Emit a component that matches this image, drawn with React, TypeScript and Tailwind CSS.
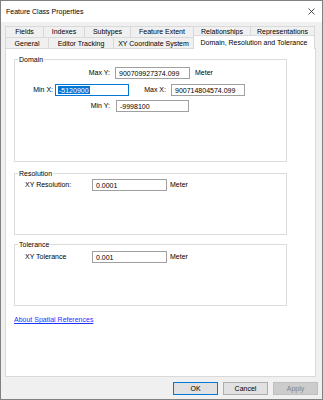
import React from 'react';

const topTabs = [
  { label: 'Fields', w: 'w-[38px]' },
  { label: 'Indexes', w: 'w-[41px]' },
  { label: 'Subtypes', w: 'w-[46px]' },
  { label: 'Feature Extent', w: 'w-[63px]' },
  { label: 'Relationships', w: 'w-[57px]' },
  { label: 'Representations', w: 'w-[65px]' },
];

const frontTabs = [
  { label: 'General', w: 'w-[43px]' },
  { label: 'Editor Tracking', w: 'w-[65px]' },
  { label: 'XY Coordinate System', w: 'w-[80px]' },
];

const Field = ({ value, w }: { value: string; w: string }) => (
  <div className={`${w} h-[12px] border border-[#a0a0a0] bg-white flex items-center pl-[3px] leading-none`}>
    {value}
  </div>
);

const Group = ({ title, className, children }: { title: string; className: string; children: React.ReactNode }) => (
  <div className={`relative w-[273px] border border-[#dcdcdc] ${className}`}>
    <span className="absolute left-[3px] -top-[5px] px-[1px] bg-white leading-[9px]">{title}</span>
    {children}
  </div>
);

export default function App() {
  return (
    <div className="w-[323px] h-[400px] border border-[#808080] bg-[#f0f0f0] flex flex-col font-['Liberation_Sans',Arial,sans-serif] text-[7px] text-black">
      {/* Title bar */}
      <div className="h-[21px] bg-white flex items-center justify-between pl-[5px] pr-[7px]">
        <span className="leading-none">Feature Class Properties</span>
        <svg width="7" height="7" viewBox="0 0 7 7">
          <path d="M0.5 0.5 L6.5 6.5 M6.5 0.5 L0.5 6.5" stroke="#222" strokeWidth="0.8" />
        </svg>
      </div>

      <div className="flex-1 flex flex-col px-[4px]">
        {/* Tabs */}
        <div className="mt-[4px] flex h-[11px]">
          {topTabs.map((t, i) => (
            <div
              key={t.label}
              className={`${t.w} h-full flex items-start pt-[1px] justify-center border-t border-l border-[#d9d9d9] leading-none ${i === topTabs.length - 1 ? 'border-r' : ''}`}
            >
              {t.label}
            </div>
          ))}
        </div>
        <div className="flex h-[11px] items-end">
          {frontTabs.map((t) => (
            <div
              key={t.label}
              className={`${t.w} h-full flex items-center justify-center border-t border-l border-[#d9d9d9] leading-none`}
            >
              {t.label}
            </div>
          ))}
          <div className="relative z-10 w-[122px] h-[14px] -mb-[1px] flex items-center justify-center bg-white border-t border-l border-r border-[#d9d9d9] leading-none">
            Domain, Resolution and Tolerance
          </div>
        </div>

        {/* Panel */}
        <div className="w-[311px] h-[329px] bg-white border border-[#d9d9d9] px-[8px] pt-[10px] flex flex-col">
          <Group title="Domain" className="h-[103px] pt-[7px]">
            <div className="flex items-center h-[12px]">
              <span className="w-[100px] text-right pr-[5px]">Max Y:</span>
              <Field value="900709927374.099" w="w-[75px]" />
              <span className="ml-[5px]">Meter</span>
            </div>
            <div className="flex items-center h-[12px] mt-[5px]">
              <span className="w-[40px] text-right pr-[2px]">Min X:</span>
              <div className="w-[74px] h-[12px] border border-[#0078d7] bg-white flex items-center pl-[2px] leading-none">
                <span className="bg-[#0078d7] text-white px-[1px] h-[8px] flex items-center">-5120900</span>
              </div>
              <span className="w-[42px] text-right pr-[5px]">Max X:</span>
              <Field value="900714804574.099" w="w-[74px]" />
            </div>
            <div className="flex items-center h-[12px] mt-[4px]">
              <span className="w-[101px] text-right pr-[6px]">Min Y:</span>
              <Field value="-9998100" w="w-[73px]" />
            </div>
          </Group>

          <Group title="Resolution" className="mt-[11px] h-[62px] pt-[5px]">
            <div className="flex items-center h-[12px]">
              <span className="w-[77px] pl-[10px]">XY Resolution:</span>
              <Field value="0.0001" w="w-[75px]" />
              <span className="ml-[3px]">Meter</span>
            </div>
          </Group>

          <Group title="Tolerance" className="mt-[9px] h-[62px] pt-[6px]">
            <div className="flex items-center h-[12px]">
              <span className="w-[77px] pl-[10px]">XY Tolerance</span>
              <Field value="0.001" w="w-[75px]" />
              <span className="ml-[3px]">Meter</span>
            </div>
          </Group>

          <a href="#" className="mt-[10px] self-start text-[#1a33ff] underline leading-none">
            About Spatial References
          </a>
        </div>

        {/* Buttons */}
        <div className="mt-[5px] flex justify-end gap-[5px]">
          <button className="w-[45px] h-[13px] border border-[#0078d7] bg-[#e1e1e1] leading-none">OK</button>
          <button className="w-[45px] h-[13px] border border-[#adadad] bg-[#e1e1e1] leading-none">Cancel</button>
          <button className="w-[45px] h-[13px] border border-[#bfbfbf] bg-[#cccccc] text-[#838383] leading-none">Apply</button>
        </div>
      </div>
    </div>
  );
}
